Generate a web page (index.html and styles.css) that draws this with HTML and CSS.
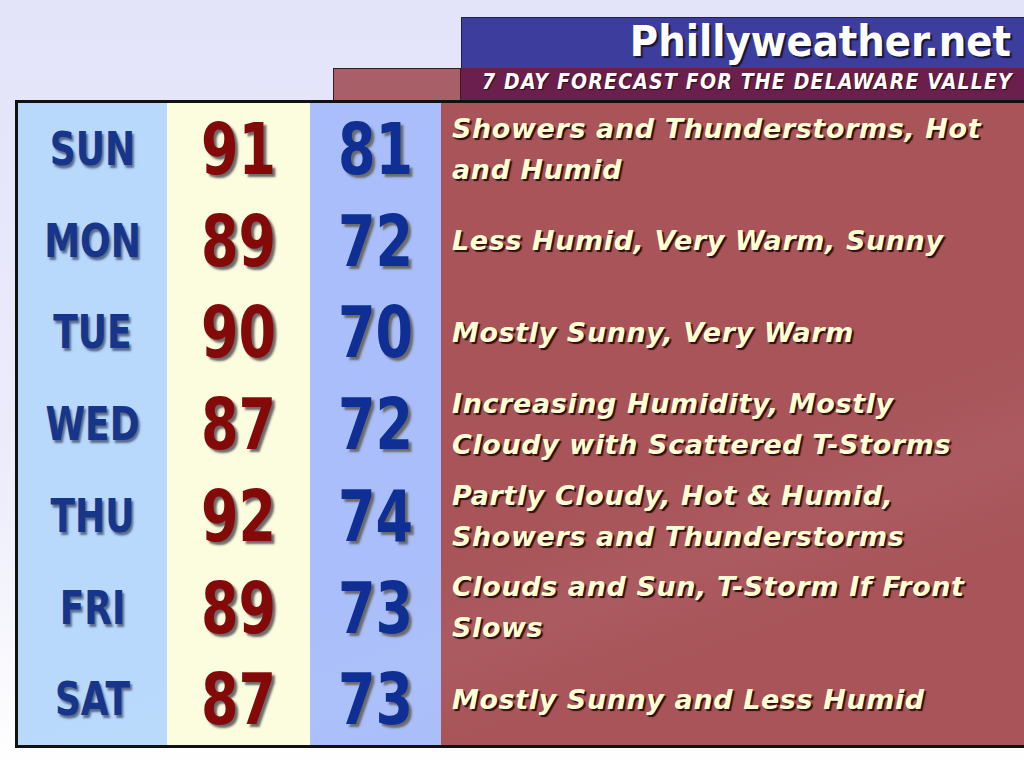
FILE: index.html
```html
<!DOCTYPE html>
<html lang="en">
<head>
  <meta charset="UTF-8">
  <title>Phillyweather.net - 7 Day Forecast</title>
  <link rel="stylesheet" href="styles.css">
</head>
<body>

<div class="page">
  <!-- Title banner -->
  <div class="banner">
    <div class="brand">Phillyweather.net</div>
    <div class="strip">
      <div class="strip-tab"></div>
      <div class="subtitle">7 DAY FORECAST FOR THE DELAWARE VALLEY</div>
    </div>
  </div>

  <!-- Forecast table -->
  <div class="forecast">
    <div class="day">SUN</div><div class="high">91</div><div class="low">81</div>
    <div class="desc">Showers and Thunderstorms, Hot and Humid</div>

    <div class="day">MON</div><div class="high">89</div><div class="low">72</div>
    <div class="desc">Less Humid, Very Warm, Sunny</div>

    <div class="day">TUE</div><div class="high">90</div><div class="low">70</div>
    <div class="desc">Mostly Sunny, Very Warm</div>

    <div class="day">WED</div><div class="high">87</div><div class="low">72</div>
    <div class="desc">Increasing Humidity, Mostly Cloudy with Scattered T-Storms</div>

    <div class="day">THU</div><div class="high">92</div><div class="low">74</div>
    <div class="desc">Partly Cloudy, Hot &amp; Humid, Showers and Thunderstorms</div>

    <div class="day">FRI</div><div class="high">89</div><div class="low">73</div>
    <div class="desc">Clouds and Sun, T-Storm If Front Slows</div>

    <div class="day">SAT</div><div class="high">87</div><div class="low">73</div>
    <div class="desc">Mostly Sunny and Less Humid</div>
  </div>
</div>

</body>
</html>
```

FILE: styles.css
```css
/* Global */
* {
  box-sizing: border-box;
  margin: 0;
  padding: 0;
}
html, body {
  height: 100%;
}
body {
  background: linear-gradient(180deg, #E3E3FA 0%, #ECECFB 60%, #FFFFFF 100%);
  font-family: "DejaVu Sans", sans-serif;
  overflow: hidden;
}
.page {
  width: 1024px;
  height: 768px;
  padding-top: 17px;
}

/* Banner */
.brand {
  margin-left: 461px;
  height: 51px;
  background-color: #3D3D9E;
  border-top: 1px solid #1E1E55;
  border-left: 1px solid #1E1E55;
  color: #fff;
  font-family: "DejaVu Sans Condensed", "DejaVu Sans", sans-serif;
  font-stretch: condensed;
  font-weight: bold;
  font-size: 43px;
  line-height: 47px;
  text-align: right;
  padding-right: 13px;
  text-shadow: 2px 2px 1px #15153A;
}
.strip {
  display: flex;
  margin-left: 333px;
  height: 32px;
}
.strip-tab {
  width: 128px;
  background-color: #A85F68;
  border: 1px solid #3A1A22;
  border-bottom: none;
}
.subtitle {
  flex: 1;
  background-color: #6A1F4C;
  color: #fff;
  font-family: "DejaVu Sans Condensed", "DejaVu Sans", sans-serif;
  font-stretch: condensed;
  font-weight: bold;
  font-style: italic;
  font-size: 21px;
  line-height: 29px;
  text-align: right;
  padding-right: 11px;
  letter-spacing: 1.2px;
  text-shadow: 1px 1px 1px #2A0A1A;
}

/* Forecast grid */
.forecast {
  margin-left: 15px;
  height: 648px;
  border: 3px solid #111;
  border-right: none;
  display: grid;
  grid-template-columns: 149px 143px 131px 1fr;
  grid-template-rows: repeat(7, 1fr);
  background:
    linear-gradient(160deg, rgba(255, 255, 255, 0) 60%, rgba(255, 255, 255, 0.04) 70%, rgba(255, 255, 255, 0) 80%),
    linear-gradient(90deg, #B8D9FC 0, #B8D9FC 149px, #FCFCDE 149px, #FCFCDE 292px, #A9BEFA 292px, #A9BEFA 423px, #A85459 423px);
}
.day, .high, .low {
  display: flex;
  align-items: center;
  justify-content: center;
  font-family: "DejaVu Sans Condensed", "DejaVu Sans", sans-serif;
  font-stretch: condensed;
  font-weight: bold;
}
.day {
  font-size: 40px;
  transform: scaleY(1.17);
  color: #17358A;
  text-shadow: 2px 2px 2px #5A6A8A;
}
.high, .low {
  font-size: 60px;
  transform: scaleY(1.2);
  text-shadow: 3px 2px 2px #6A6A6A;
}
.high {
  color: #840A0A;
}
.low {
  color: #102F94;
}
.desc {
  display: flex;
  align-items: center;
  padding-left: 11px;
  padding-right: 34px;
  color: #FFFFD6;
  font-weight: bold;
  font-style: italic;
  font-size: 27px;
  letter-spacing: 0.6px;
  line-height: 41px;
  text-shadow: 2px 2px 1px #2E0E10;
}
```
